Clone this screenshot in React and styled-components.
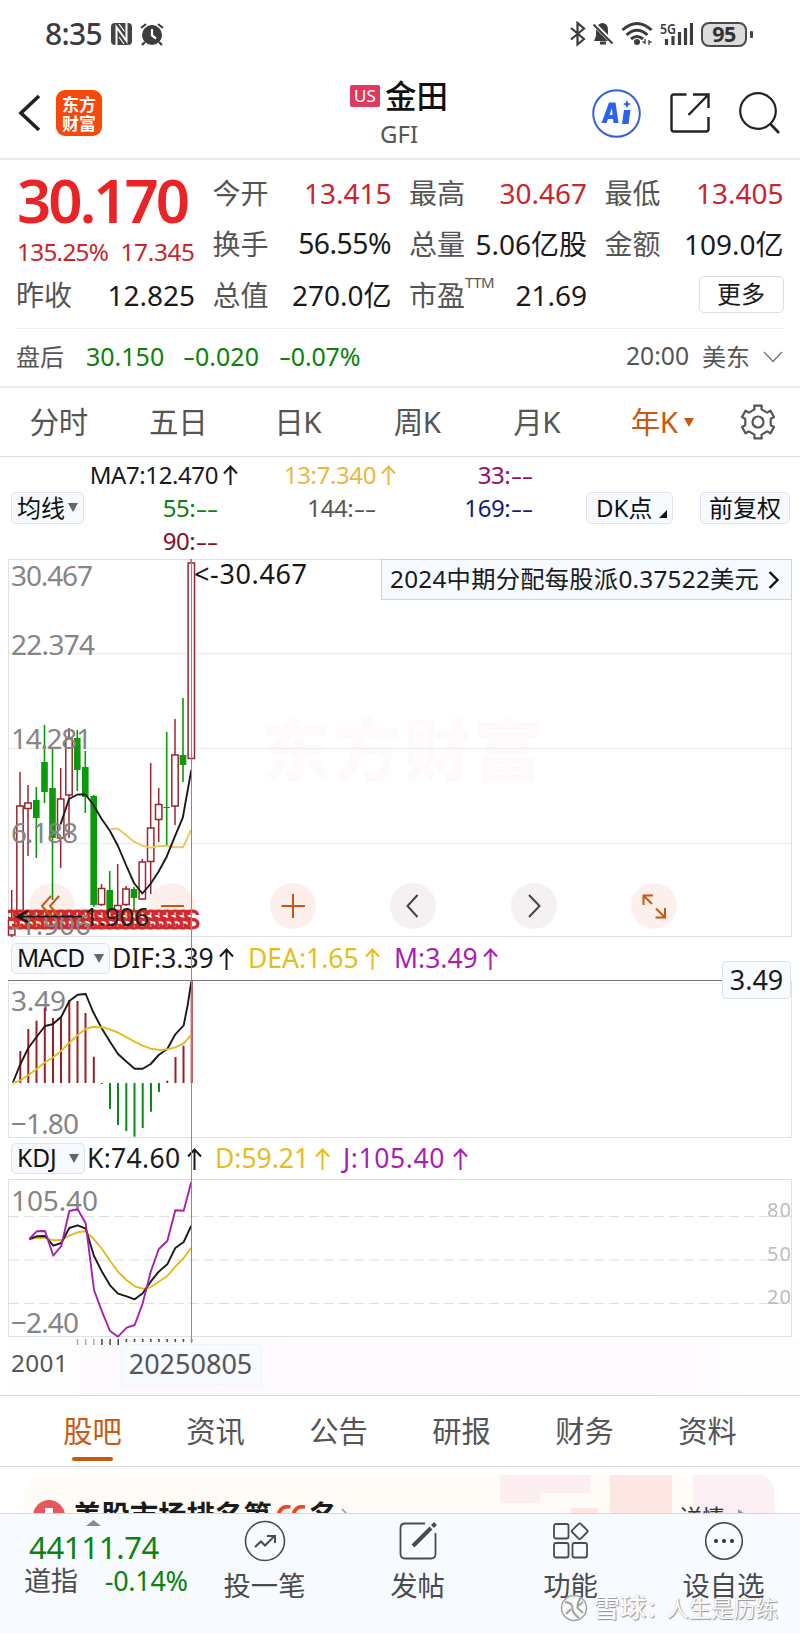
import React from "react";
import styled, { createGlobalStyle } from "styled-components";

const Global = createGlobalStyle`
  *, *::before, *::after { box-sizing: border-box; }
  body { margin: 0; background: #fff; }
  svg { display: block; flex: none; }
`;

const sans = `"Noto Sans", "Noto Sans CJK SC", sans-serif`;
const RED = "#c9252b";
const GREEN = "#0b820b";
const GOLD = "#e3bd1e";
const PURPLE = "#a81fb0";
const ORANGE = "#c8590f";

const Screen = styled.main`
  position: relative;
  width: 800px;
  height: 1633px;
  overflow: hidden;
  display: flex;
  flex-direction: column;
  background: #fff;
  color: #1a1a1a;
  font-family: ${sans};
  white-space: nowrap;
`;

const Num = styled.span`
  font-size: ${(p) => p.$size || 28}px;
  line-height: 1;
  font-weight: ${(p) => p.$weight || 400};
  color: ${(p) => p.$color || "#1a1a1a"};
  letter-spacing: ${(p) => p.$ls || 0}px;
  margin-right: ${(p) => -(p.$ls || 0)}px;
`;
const Dash = styled.span`
  display: inline-block;
  transform: scaleX(1.5);
  transform-origin: 100% 50%;
  margin-left: ${(p) => p.$ml || 3}px;
`;

/* ---------- status bar ---------- */
const StatusBar = styled.header`
  height: 68px;
  flex: none;
  display: flex;
  align-items: center;
  justify-content: space-between;
  padding: 0 47px 0 45px;
`;
const StatusGroup = styled.div`
  display: flex;
  align-items: center;
  gap: ${(p) => p.$gap}px;
`;
const Clock = styled(Num)`
  padding-bottom: 1px;
`;
const Battery = styled.div`
  width: 46px;
  height: 25px;
  border: 2px solid #4a4a4a;
  border-radius: 8px;
  background: #dcdcdc;
  color: #333;
  font-size: 21.5px;
  font-weight: 700;
  line-height: 20px;
  letter-spacing: -0.5px;
  text-align: center;
`;
const Nub = styled.i`
  width: 3px;
  height: 7px;
  border-radius: 1px;
  background: #444;
  margin-left: -5px;
`;

/* ---------- header ---------- */
const Header = styled.nav`
  height: 92px;
  flex: none;
  display: grid;
  grid-template-columns: 300px 1fr 300px;
  align-items: center;
  border-bottom: 2px solid #ebebeb;
`;
const HeadLeft = styled.div`
  display: flex;
  align-items: center;
  gap: 15px;
  padding-left: 17px;
`;
const Logo = styled.div`
  width: 46px;
  height: 46px;
  border-radius: 9px;
  background: #f7480b;
  color: #fff;
  font: 700 17px/19px "Noto Sans CJK SC", sans-serif;
  text-align: center;
  padding-top: 4px;
`;
const HeadTitle = styled.div`
  display: flex;
  flex-direction: column;
  align-items: center;
  gap: 5px;
  padding: 0 2px 0 0;
`;
const TitleRow = styled.div`
  display: flex;
  align-items: center;
  gap: 5px;
  font-size: 31.5px;
  line-height: 36px;
  font-weight: 500;
  color: #111;
`;
const Badge = styled.span`
  width: 30px;
  height: 22px;
  border-radius: 2px;
  background: #e0395f;
  color: #fff;
  font-size: 17px;
  font-weight: 400;
  line-height: 21px;
  text-align: center;
`;
const Ticker = styled.div`
  font-size: 24px;
  line-height: 30px;
  color: #555;
`;
const HeadRight = styled.div`
  display: flex;
  align-items: center;
  justify-content: flex-end;
  gap: 29px;
  padding-right: 20px;
`;

/* ---------- quote ---------- */
const Quote = styled.section`
  height: 169px;
  flex: none;
  margin: 0 16px;
  padding: 7px 0 0 0;
  display: grid;
  grid-template-columns: 179px 179px 178px 179px;
  column-gap: 17.5px;
  border-bottom: 1px solid #f0f0f0;
`;
const QuoteCol = styled.div`
  display: flex;
  flex-direction: column;
`;
const Price = styled.div`
  height: 66px;
  display: flex;
  align-items: center;
  padding-left: 1px;
`;
const Delta = styled.div`
  height: 36px;
  display: flex;
  align-items: center;
  justify-content: space-between;
  padding: 2px 0 0 1px;
`;
const Pair = styled.div`
  height: 51px;
  display: flex;
  align-items: center;
  justify-content: space-between;
`;
const Label = styled.span`
  font-size: 28px;
  line-height: 1;
  color: #555;
  display: flex;
`;
const Sup = styled.sup`
  font-size: 15px;
  line-height: 1;
  margin: -6px 0 0 0;
  letter-spacing: -0.5px;
`;
const More = styled.button`
  width: 85px;
  height: 37px;
  margin-left: auto;
  border: 1.5px solid #dedede;
  border-radius: 5px;
  background: #fff;
  color: #1a1a1a;
  font: 24px/30px ${sans};
  padding: 0 0 2px;
`;
const AfterHours = styled.section`
  height: 59px;
  flex: none;
  display: flex;
  align-items: center;
  padding: 0 17px 2px 16px;
  border-bottom: 2px solid #ebebeb;
  color: #555;
  font-size: 24px;
`;
const Slot = styled.span`
  width: ${(p) => p.$w}px;
  display: flex;
  line-height: 1;
`;
const Fill = styled.span`
  flex: 1;
`;

/* ---------- period tabs ---------- */
const Periods = styled.nav`
  height: 69px;
  flex: none;
  display: flex;
  align-items: center;
  border-bottom: 1px solid #dcdcdc;
`;
const Period = styled.a`
  width: 119.5px;
  padding-right: ${(p) => (p.$on ? 0 : 2)}px;
  text-align: center;
  font-size: 29.5px;
  line-height: 1;
  letter-spacing: -0.3px;
  color: ${(p) => (p.$on ? ORANGE : "#555")};
  display: flex;
  justify-content: center;
  align-items: center;
  gap: 6px;
  padding-left: ${(p) => (p.$on ? 10 : 0)}px;
`;
const Gear = styled.span`
  margin-left: 22px;
`;

/* ---------- chart ---------- */
const Averages = styled.section`
  height: 102px;
  flex: none;
  display: grid;
  grid-template-columns: 80px 127px 158px 157px 1fr;
  grid-template-rows: 35px 32px 33px;
  align-items: center;
  padding: 0 10px 0 11px;
`;
const Avg = styled.span`
  justify-self: end;
  position: relative;
  font-size: 24px;
  line-height: 1;
  letter-spacing: ${(p) => p.$ls ?? -0.4}px;
  color: ${(p) => p.$color};
`;
const ArrowOver = styled.span`
  position: absolute;
  left: calc(100% + 5px);
  top: 2px;
`;
const Chip = styled.button`
  height: ${(p) => p.$h || 32}px;
  width: ${(p) => p.$w}px;
  display: flex;
  align-items: center;
  justify-content: ${(p) => p.$just || "space-between"};
  padding: 0 5px 1px 5px;
  border: 1px solid #dde3ea;
  border-radius: 5px;
  background: #f6faff;
  color: #111;
  font: ${(p) => p.$size || 24}px/1 ${sans};
  letter-spacing: ${(p) => p.$ls || 0}px;
`;
const ChipRow = styled.div`
  display: flex;
  justify-content: flex-end;
  gap: 27px;
`;
const FirstCell = styled.div`
  grid-row: 2;
  grid-column: 1;
`;
const DkLabel = styled.span`
  padding-left: 4px;
`;
const Charts = styled.section`
  position: relative;
  height: 837px;
  flex: none;
  display: flex;
  flex-direction: column;
  border-bottom: 1px solid #d8d8d8;
`;
const Plot = styled.div`
  height: ${(p) => p.$h}px;
  flex: none;
  svg { overflow: visible; }
`;
const IndicatorRow = styled.div`
  height: ${(p) => p.$h}px;
  flex: none;
  display: flex;
  align-items: center;
  padding: 0 0 ${(p) => p.$pb || 0}px 11px;
`;
const Reading = styled.span`
  width: ${(p) => p.$w}px;
  display: flex;
  align-items: center;
  justify-content: space-between;
  margin-left: ${(p) => p.$ml}px;
  font-size: 26.5px;
  line-height: 1;
  color: ${(p) => p.$color};
  letter-spacing: ${(p) => p.$ls || 0}px;
`;
const DateRow = styled.div`
  height: 55px;
  flex: none;
  display: flex;
  align-items: flex-start;
  gap: 54px;
  padding: 5px 0 0 11px;
  background: linear-gradient(90deg, #fff 0, #fdfafd 120px, #fdfcfe 800px);
`;
const StartDate = styled.span`
  width: 56px;
  font-size: 24.3px;
  line-height: 38px;
  color: #555;
  letter-spacing: 0.4px;
`;
const DateTag = styled.span`
  width: 141px;
  height: 42px;
  border: 1px solid #f0f4fa;
  border-radius: 4px;
  background: #f7faff;
  color: #555;
  font-size: 27px;
  line-height: 38px;
  text-align: center;
  padding-right: 2px;
`;
const Banner = styled.div`
  position: absolute;
  right: 8px;
  top: 0;
  width: 411px;
  height: 41px;
  border: 1px solid #ced4d8;
  background: #f6faff;
  display: flex;
  align-items: center;
  justify-content: space-between;
  padding: 0 12px 0 8px;
  font-size: 24.3px;
  line-height: 1;
  letter-spacing: 0.25px;
`;
const Tag = styled.div`
  position: absolute;
  left: 722px;
  top: 402px;
  width: 69px;
  height: 38px;
  border: 1px solid #dde3ea;
  border-radius: 4px;
  background: #f7faff;
  font-size: 27px;
  line-height: 36px;
  text-align: center;
`;
const Crosshair = styled.i`
  position: absolute;
  left: 191px;
  top: 0;
  width: 1px;
  height: 784px;
  background: #8a8a8a;
`;

/* ---------- lower part ---------- */
const Sections = styled.nav`
  height: 71px;
  flex: none;
  display: flex;
  padding: 0 31px;
  border-bottom: 1px solid #d6d8d8;
`;
const SectionTab = styled.a`
  width: 123.2px;
  display: flex;
  flex-direction: column;
  align-items: center;
  font-size: 29.3px;
  line-height: 41px;
  padding-top: 15px;
  color: ${(p) => (p.$on ? ORANGE : "#555")};
  &::after {
    content: "";
    width: 41px;
    height: 4px;
    border-radius: 2px;
    margin-top: 5px;
    background: ${(p) => (p.$on ? ORANGE : "transparent")};
  }
`;
const Feed = styled.section`
  height: 46px;
  flex: none;
  overflow: hidden;
  padding: 8px 25px 0 24px;
`;
const Card = styled.div`
  height: 90px;
  border-radius: 18px;
  overflow: hidden;
  display: flex;
  background:
    linear-gradient(#fdeef1, #fdeef1) 476px 0 / 90px 18px no-repeat,
    linear-gradient(#fdeef1, #fdeef1) 476px 0 / 40px 28px no-repeat,
    linear-gradient(#fde6e4, #fde6e4) 547px 33px / 27px 28px no-repeat,
    linear-gradient(#fde7e2, #fde7e2) 586px 0 / 62px 60px no-repeat,
    linear-gradient(#fdf0f4, #fdf0f4) 669px 0 / 90px 60px no-repeat,
    #fffbf6;
  padding: 25px 28px 0 9px;
  align-items: flex-start;
`;
const Headline = styled.h3`
  margin: -3px 0 0 8px;
  font-size: 28.4px;
  line-height: 36px;
  font-weight: 700;
  color: #1b1b1b;
  display: flex;
`;
const Rank = styled.em`
  color: #e8481c;
  margin: 0 5px 0 3px;
  letter-spacing: -1px;
`;
const Detail = styled.span`
  font-size: 23px;
  line-height: 32px;
  color: #333;
  margin-top: 1px;
`;
const Bottom = styled.footer`
  position: relative;
  height: 121px;
  flex: none;
  display: flex;
  background: #f7fafe;
  border-top: 1px solid #d3d8dc;
`;
const Index = styled.div`
  width: 188px;
  padding-left: 24px;
  display: flex;
  flex-direction: column;
`;
const IndexMark = styled.svg`
  margin: 6px 0 0 62px;
`;
const IndexValue = styled.div`
  height: 31px;
  padding: 3px 0 0 5px;
  margin-top: 3px;
`;
const IndexRow = styled.div`
  height: 40px;
  display: flex;
  justify-content: space-between;
  align-items: center;
  font-size: 27px;
  line-height: 1;
  color: #4c4c4c;
`;
const Action = styled.a`
  width: 153px;
  display: flex;
  flex-direction: column;
  align-items: center;
  font-size: 27.3px;
  line-height: 36px;
  color: #4a4a4a;
  padding-top: 6px;
  gap: 6px;
`;
const Signature = styled.div`
  position: absolute;
  right: 22px;
  bottom: 8px;
  display: flex;
  align-items: center;
  gap: 5px;
  color: #fdfdfd;
  font-size: 22.3px;
  line-height: 34px;
  text-shadow: 1px 1px 1px #929292, 0 0 1px #b2b2b2;
`;
const SignatureName = styled.b`
  font-weight: 500;
  font-size: 26.5px;
`;
const SignatureColon = styled.span`
  margin-right: -2px;
`;

const Up = ({ h = 20 }) => (
  <svg width="15" height={h} viewBox={`0 0 15 ${h}`} fill="none" stroke="currentColor" strokeWidth="2">
    <path d={`M7.5 ${h}V1.500M1 8.500L7.500 1.500L14 8.500`} />
  </svg>
);
const Down = ({ color = "#666" }) => (
  <svg width="10" height="9" viewBox="0 0 10 9"><path d="M0 0H10L5 9Z" fill={color} /></svg>
);

/* x, high, low, body top, body bottom, rising */
const candles = [
  [11.7, 890, 937, 920, 935, 1], [20, 772, 912, 806, 914, 1], [28, 785, 856, 803, 808.5, 1],
  [36.3, 787, 858, 800, 818, 0], [44.5, 725, 803, 762, 792, 0], [52.5, 748, 900, 788, 838, 0],
  [60.7, 768, 868, 799, 838, 1], [69, 728, 838, 739, 795, 1], [77.3, 730, 791, 738, 770, 0],
  [85.3, 751, 813, 767, 797, 0], [93.7, 795, 907, 796, 905, 0], [101.5, 884, 906, 888.5, 904.5, 1],
  [109.7, 871, 912, 890, 912, 0], [117.7, 864, 912, 905.5, 912, 1], [126, 886, 906, 889, 904.5, 1],
  [134, 887, 912, 889, 898, 0], [142.3, 859, 900, 862, 899, 1], [150.7, 763, 894, 828, 861.5, 1],
  [158.7, 788, 842, 804.5, 819.5, 1], [166.7, 732, 845, 807, 808, 0], [175, 719, 825, 755, 806, 1],
  [183, 698, 782, 755, 765, 0], [191.3, 559, 759, 563, 758.5, 1],
];
const bars = [
  [20.3, 1051], [28.3, 1029], [36.5, 1020.7], [44.8, 1007.7], [53, 1018], [61, 1016.7], [69.3, 1000],
  [77.5, 1001], [85.5, 1013], [93.8, 1056.7], [101.8, 1084], [110, 1109], [118, 1125], [126.3, 1131],
  [134.5, 1136.7], [142.7, 1128], [151, 1111.7], [159, 1092], [167.3, 1080.7], [175.5, 1057],
  [183.5, 1045.7], [191.7, 981],
];
const ma7 = "60.5,824.5 69,799 77.5,794.5 85.5,794.5 93.5,805 101.5,818.7 110,831 118,846 126,865 134,883 142.3,893.5 150.5,884 158.5,871.7 166.7,856.7 174.8,836.7 182.8,817.7 191.3,770";
const ma13 = "110.7,828.7 118,828.7 126,835 134,841.7 142.3,845.7 150.5,847.7 158.5,846 166.7,846 174.8,847.3 183,847.3 191,830";
const dif = "12.7,1083 20,1065 28.3,1048 36.7,1036.7 45,1026 52.7,1024.3 61.3,1016.7 69.3,1001 77.7,994.7 85.7,994 93.3,1012.3 101.7,1028.3 110,1041.7 118,1054 126,1061.3 134.7,1068.7 142.7,1068.7 150.7,1064 158.7,1055 167.3,1049 175.3,1034.3 183.7,1025.3 187.7,1005 191.3,981.7";
const dea = "12.7,1083 20,1080.7 28.3,1075 36.7,1069 45,1062.3 53.3,1057.3 61.3,1050.7 69.3,1042.7 77.7,1035 85.7,1029 91.7,1027 103.3,1027.3 110,1029.3 118,1032.7 134.7,1041.7 142.7,1045.7 150.7,1048.7 160,1050 167.3,1049.3 175.3,1047.3 183.7,1043.3 191.3,1035";
const kLine = "29.3,1239 36.7,1236.3 45,1236 53.3,1245.7 61.3,1243 69.3,1228 77.7,1225.3 85.7,1228.7 94,1256 102,1271.7 110,1285.3 118,1293.7 126.7,1296.3 134.7,1299.3 142.7,1293.3 150.7,1281.7 158.7,1271.7 167.3,1264.3 175.3,1248 183.7,1242 191.3,1225.7";
const dLine = "29.3,1239 36.7,1238 45,1237.7 53.3,1240.3 61.3,1240 69.3,1235.7 77.7,1232.3 85,1231.3 94,1239.3 102,1249 110,1260.7 118,1271.7 126.7,1280.3 134.7,1286.3 142.7,1288.7 146.7,1288.7 150.7,1287 158.7,1281.7 167.3,1276 175.3,1266.7 183.7,1258 191.3,1247.7";
const jLine = "29.3,1239 36.7,1231.3 45,1231 53.3,1255.7 61.3,1246 69.3,1211 77.7,1209.3 85.7,1223.3 94,1290 102,1311.7 110,1331 118,1336.7 126.7,1327.7 134.7,1325 142.7,1303.3 150.7,1271.7 158.7,1249.3 167.3,1241 175.3,1210.3 183.7,1210.7 191.3,1181.7";

const Line = ({ points, color, w = 1.9 }) => (
  <polyline points={points} fill="none" stroke={color} strokeWidth={w} strokeLinejoin="round" />
);
const Scale = ({ x = 11, y, len, children, size = 28, fill = "#858585" }) => (
  <text x={x} y={y} fontSize={size} fill={fill} fontFamily={sans} textLength={len}>{children}</text>
);

const PricePlot = () => (
  <Plot $h={378}>
    <svg width="800" height="378" viewBox="0 559 800 378">
      <clipPath id="plotLeft"><rect x="8" y="900" width="192" height="40" /></clipPath>
      <text x="262" y="776" fontSize="68" fontWeight="900" fill="#fefafa" fontFamily={sans} textLength="280">东方财富</text>
      <rect x="8.5" y="559.5" width="783" height="377" fill="none" stroke="#dfe1e1" />
      {[653.5, 748.5, 843.5].map((y) => <path key={y} d={`M9 ${y}H791`} stroke="#efefef" strokeWidth="1.3" />)}
      {[[52, 1], [172, 1], [293, 1], [413, 0], [534, 0], [654, 1]].map(([x, warm]) => (
        <circle key={x} cx={x} cy="906" r="23" fill={warm ? "#fdf0ec" : "#f5f1f3"} />
      ))}
      {candles.map(([x, hi, lo, top, bot, rise]) => rise ? (
        <g key={x} stroke="#9d2530" strokeWidth="1.5" fill="#fff">
          <path d={`M${x} ${hi}V${lo}`} />
          <rect x={x - 3.2} y={top} width="6.4" height={bot - top} />
        </g>
      ) : (
        <g key={x} fill="#0a9a0a">
          <rect x={x - 0.8} y={hi} width="1.6" height={lo - hi} />
          <rect x={x - 3.3} y={top} width="6.6" height={bot - top} />
        </g>
      ))}
      <Line points={ma13} color="#edc660" />
      <Line points={ma7} color="#1a1a1a" />
      <Scale y={586} len={82}>30.467</Scale>
      <Scale y={655} len={84}>22.374</Scale>
      <Scale y={749} len={81}>14.281</Scale>
      <Scale y={843} len={67}>6.188</Scale>
      <g clipPath="url(#plotLeft)">
        {candles.map(([x]) => (
          <text key={x} x={x} y="929" textAnchor="middle" fontSize="27" fill="#d02a2a" stroke="#d02a2a" strokeWidth="1" fontFamily='"Liberation Sans", sans-serif'>S</text>
        ))}
      </g>
      <Scale y={935} len={80}>-1.906</Scale>
      <g fill="none" stroke="#161616" strokeWidth="2">
        <path d="M28 911L17 916.500L28 922M17 916.500H82" />
      </g>
      <Scale x={84} y={926} len={65} size={26} fill="#202020">1.906</Scale>
      <text x="194" y="584" fontSize="27" fill="#161616" fontFamily={sans} textLength="113">&lt;-30.467</text>
      <g fill="none" strokeWidth="2" stroke="#c8590f">
        <path d="M51 896L42 906L51 916M59 896L50 906L59 916M161 906H184M281.500 906H305M293 894V918" />
        <path d="M643.500 905V895.500H653M644 896L652 904M665 908V917.500H655.500M664.500 917L656 908.500" />
      </g>
      <path d="M417.500 895L407.500 906L417.500 917M529 895L539.500 906L529 917" fill="none" stroke="#444" strokeWidth="2" />
    </svg>
  </Plot>
);

const MacdPlot = () => (
  <Plot $h={158}>
    <svg width="800" height="158" viewBox="0 980 800 158">
      <path d="M8.500 981V1137.500H791.500V981" fill="none" stroke="#e0e2e2" />
      <path d="M9 983.500H722" stroke="#f4f4f4" />
      <path d="M8 980.500H722" stroke="#777" />
      <Scale y={1011} len={55}>3.49</Scale>
      <Scale y={1134} len={68}>−1.80</Scale>
      {bars.map(([x, y]) => (
        <path key={x} d={`M${x} 1083V${y}`} stroke={y > 1083 ? "#0b8a1b" : "#9d1f26"} strokeWidth="2" />
      ))}
      <Line points={dif} color="#1a1a1a" />
      <Line points={dea} color="#e3bd1e" />
    </svg>
  </Plot>
);

const KdjPlot = () => (
  <Plot $h={159}>
    <svg width="800" height="159" viewBox="0 1180 800 159">
      <rect x="8.500" y="1179.500" width="783" height="157" fill="none" stroke="#dfe1e1" />
      {[1216.500, 1260, 1303.500].map((y) => (
        <path key={y} d={`M9 ${y}H791`} stroke="#dedede" strokeWidth="1.200" strokeDasharray="10 5" />
      ))}
      <Scale y={1211} len={87}>105.40</Scale>
      <Scale y={1333} len={68}>−2.40</Scale>
      <Scale x={767} y={1217} len={24} size={20} fill="#bdbdbd">80</Scale>
      <Scale x={767} y={1261} len={24} size={20} fill="#bdbdbd">50</Scale>
      <Scale x={767} y={1304} len={24} size={20} fill="#bdbdbd">20</Scale>
      <Line points={dLine} color="#e3b91e" />
      <Line points={kLine} color="#1a1a1a" />
      <Line points={jLine} color="#a81fb0" />
    </svg>
  </Plot>
);

const TickMarks = styled.svg`
  position: absolute;
  left: 76px;
  top: 780px;
`;
const Ticks = () => (
  <TickMarks width="120" height="7" viewBox="0 0 120 7">
    {Array.from({ length: 15 }, (_, i) => (
      <path key={i} d={`M${1.500 + i * 8.150} 0V${i < 6 ? 6 : 3}`} stroke={i < 3 ? "#aaa" : "#444"} strokeWidth="1.500" />
    ))}
  </TickMarks>
);

const gearPath = (() => {
  const pts = [];
  for (let i = 0; i < 6; i++) {
    const a = ((i * 60 - 90) * Math.PI) / 180;
    [[-0.43, 12.8], [-0.27, 13.2], [-0.22, 16.8], [0.22, 16.8], [0.27, 13.2], [0.43, 12.8]].forEach(([d, r]) =>
      pts.push(`${(18 + r * Math.cos(a + d)).toFixed(1)},${(18 + r * Math.sin(a + d)).toFixed(1)}`));
  }
  return pts.join(" ");
})();

const StatusIcons = () => (
  <svg width="123" height="26" viewBox="570 21 123 26" fill="none" stroke="#3c3c3c">
    <path d="M571 28L584 39L577.500 44.500V23L584 28.500L571 39.500" strokeWidth="2.200" />
    <path d="M594 41H612L608 35V30Q608 23 602 23Q596 24 596 32V36Z" fill="#3c3c3c" stroke="none" />
    <path d="M600 43H606" strokeWidth="3" />
    <path d="M593 23L614 44" stroke="#fff" strokeWidth="4.500" /><path d="M593.500 24.500L612.500 43.500" strokeWidth="2" />
    <path d="M622.500 30Q637 17 651.500 30M626.500 35Q637 25.500 647.500 35M631 39Q637 34 643 39" strokeWidth="3" />
    <circle cx="637" cy="42" r="3" fill="#3c3c3c" stroke="none" />
    <path d="M645 39V44M642.500 42H645M649 40V45M649 42H651.500" strokeWidth="1.300" />
    <path d="M666.500 39V45M673 36V45M679.500 32V45M685.500 28V45M691.500 23V45" strokeWidth="3.200" />
    <text x="660" y="33.500" fontSize="14.500" fontWeight="600" fill="#3c3c3c" stroke="none" fontFamily={sans} textLength="16" lengthAdjust="spacingAndGlyphs">5G</text>
  </svg>
);

const Blank = ({ n, color }) => <Avg $color={color}>{n}:<Dash $ml={8}>--</Dash></Avg>;

export default function App() {
  return (
    <Screen>
      <Global />
      <StatusBar>
        <StatusGroup $gap={8}>
          <Clock $size={30} $weight={500} $color="#3c3c3c" $ls={-0.7}>8:35</Clock>
          <svg width="21" height="22" viewBox="0 0 21 22" fill="none">
            <rect width="21" height="22" rx="4" fill="#444" />
            <path d="M5.500 22V4L15.500 18V0" stroke="#fff" strokeWidth="2" /><path d="M8 1L13.500 8.500M8 14L13 21" stroke="#fff" strokeWidth="1.200" />
          </svg>
          <svg width="24" height="23" viewBox="0 0 24 23" fill="none" stroke="#3c3c3c">
            <circle cx="12" cy="12" r="10" fill="#3c3c3c" stroke="none" />
            <path d="M1 5L6 1M23 5L18 1M5 19L2 22M19 19L22 22" strokeWidth="2.200" />
            <path d="M12 6V12.500L16 15.500" stroke="#fff" strokeWidth="2.200" />
          </svg>
        </StatusGroup>
        <StatusGroup $gap={8}>
          <StatusIcons />
          <Battery>95</Battery>
          <Nub />
        </StatusGroup>
      </StatusBar>

      <Header>
        <HeadLeft>
          <svg width="24" height="38" viewBox="0 0 24 38" fill="none" stroke="#222" strokeWidth="3.600"><path d="M22 2L4 19L22 36" /></svg>
          <Logo>东方<br />财富</Logo>
        </HeadLeft>
        <HeadTitle>
          <TitleRow><Badge>US</Badge>金田</TitleRow>
          <Ticker>GFI</Ticker>
        </HeadTitle>
        <HeadRight>
          <svg width="49" height="49" viewBox="0 0 49 49">
            <circle cx="24.500" cy="24.500" r="23.300" fill="#fff" stroke="#3560d8" strokeWidth="2" />
            <path d="M9.500 34L17 13.500H23.500L26.500 34H21.500L21 30H16L14.500 34ZM17.500 26H20.500L20 19Z" fill="#2b62ee" fillRule="evenodd" />
            <path d="M32 21H38.500L36.500 35H30ZM35 11L36.300 14L39 15L36.300 16.300L35 19L33.500 16.300L31 15L33.500 14Z" fill="#2b62ee" />
          </svg>
          <svg width="40" height="40" viewBox="0 0 40 40" fill="none" stroke="#222" strokeWidth="2.400">
            <path d="M16.500 1.500H4Q1.500 1.500 1.500 4V36Q1.500 38.500 4 38.500H36Q38.500 38.500 38.500 36V24M23 1.500H38.500V15M38 2L18.500 22" />
          </svg>
          <svg width="41" height="42" viewBox="0 0 41 42" fill="none" stroke="#222" strokeWidth="2.200">
            <circle cx="19" cy="19" r="17.800" /><path d="M31 31.500L40 41" strokeWidth="2.600" />
          </svg>
        </HeadRight>
      </Header>

      <Quote>
        <QuoteCol>
          <Price><Num $size={60} $weight={600} $color="#e92326" $ls={-3}>30.170</Num></Price>
          <Delta><Num $size={24.300} $color={RED} $ls={-0.700}>135.25%</Num><Num $size={24.300} $color={RED} $ls={-0.300}>17.345</Num></Delta>
          <Pair><Label>昨收</Label><Num>12.825</Num></Pair>
        </QuoteCol>
        <QuoteCol>
          <Pair><Label>今开</Label><Num $color={RED}>13.415</Num></Pair>
          <Pair><Label>换手</Label><Num $size={28.300} $ls={-0.500}>56.55%</Num></Pair>
          <Pair><Label>总值</Label><Num>270.0亿</Num></Pair>
        </QuoteCol>
        <QuoteCol>
          <Pair><Label>最高</Label><Num $color={RED}>30.467</Num></Pair>
          <Pair><Label>总量</Label><Num>5.06亿股</Num></Pair>
          <Pair><Label>市盈<Sup>TTM</Sup></Label><Num>21.69</Num></Pair>
        </QuoteCol>
        <QuoteCol>
          <Pair><Label>最低</Label><Num $color={RED}>13.405</Num></Pair>
          <Pair><Label>金额</Label><Num>109.0亿</Num></Pair>
          <Pair><More>更多</More></Pair>
        </QuoteCol>
      </Quote>

      <AfterHours>
        <Slot $w={70}>盘后</Slot>
        <Slot $w={97}><Num $size={25} $color={GREEN}>30.150</Num></Slot>
        <Slot $w={96}><Num $size={25} $color={GREEN}><Dash $ml={4}>-</Dash>0.020</Num></Slot>
        <Num $size={25} $color={GREEN} $ls={-0.200}><Dash $ml={4}>-</Dash>0.07%</Num>
        <Fill />
        <Slot $w={76}><Num $size={24.700} $color="#555">20:00</Num></Slot>
        <Slot $w={61}>美东</Slot>
        <svg width="20" height="12" viewBox="0 0 20 12" fill="none" stroke="#777" strokeWidth="1.400"><path d="M1 1L10 10.500L19 1" /></svg>
      </AfterHours>

      <Periods>
        {["分时", "五日", "日K", "周K", "月K"].map((t) => <Period key={t}>{t}</Period>)}
        <Period $on>年K<Down color={ORANGE} /></Period>
        <Gear><svg width="38" height="36" viewBox="-1 0 38 36" fill="none" stroke="#555" strokeWidth="2.200" strokeLinejoin="round"><polygon points={gearPath} /><circle cx="18" cy="18" r="5.500" /></svg></Gear>
      </Periods>

      <Averages>
        <span />
        <Avg $color="#1a1a1a">MA7:12.470<ArrowOver><Up /></ArrowOver></Avg>
        <Avg $color="#e8b840">13:7.340<ArrowOver><Up /></ArrowOver></Avg>
        <Blank n="33" color="#980c68" />
        <span />
        <FirstCell><Chip $w={73}>均线<Down /></Chip></FirstCell>
        <Blank n="55" color={GREEN} />
        <Blank n="144" color="#555" />
        <Blank n="169" color="#101d80" />
        <ChipRow>
          <Chip $w={87}><DkLabel>DK点</DkLabel><svg width="8" height="22" viewBox="0 0 8 22"><path d="M8 13V21H0Z" fill="#111" /></svg></Chip>
          <Chip $w={90} $just="center">前复权</Chip>
        </ChipRow>
        <span />
        <Blank n="90" color="#8a0f1c" />
      </Averages>

      <Charts>
        <PricePlot />
        <IndicatorRow $h={43}>
          <Chip $w={99} $h={31} $size={24.500} $ls={-0.900}>MACD<Down /></Chip>
          <Reading $ml={2} $w={122} $color="#1a1a1a"><span>DIF:3.39</span><Up h={22} /></Reading>
          <Reading $ml={14} $w={132} $color={GOLD}><span>DEA:1.65</span><Up h={22} /></Reading>
          <Reading $ml={14} $w={104} $color={PURPLE}><span>M:3.49</span><Up h={22} /></Reading>
        </IndicatorRow>
        <MacdPlot />
        <IndicatorRow $h={42} $pb={1}>
          <Chip $w={74} $h={31} $size={24.500}>KDJ<Down /></Chip>
          <Reading $ml={2} $w={115} $color="#1a1a1a" $ls={0.300}><span>K:74.60</span><Up h={22} /></Reading>
          <Reading $ml={13} $w={115} $color={GOLD}><span>D:59.21</span><Up h={22} /></Reading>
          <Reading $ml={13} $w={125} $color={PURPLE} $ls={0.600}><span>J:105.40</span><Up h={22} /></Reading>
        </IndicatorRow>
        <KdjPlot />
        <DateRow><StartDate>2001</StartDate><DateTag>20250805</DateTag></DateRow>
        <Ticks />
        <Crosshair />
        <Banner>
          2024中期分配每股派0.37522美元
          <svg width="11" height="18" viewBox="0 0 11 18" fill="none" stroke="#111" strokeWidth="2.400"><path d="M1.500 1L9.500 9L1.500 17" /></svg>
        </Banner>
        <Tag>3.49</Tag>
      </Charts>

      <Sections>
        {["股吧", "资讯", "公告", "研报", "财务", "资料"].map((t, i) => <SectionTab key={t} $on={i === 0}>{t}</SectionTab>)}
      </Sections>

      <Feed>
        <Card>
          <svg width="32" height="32" viewBox="0 0 32 32"><circle cx="16" cy="16" r="16" fill="#e4575a" /><path d="M12 8H20V16H12Z" fill="#fff" /></svg>
          <Headline>美股市场排名第<Rank>66</Rank>名</Headline>
          <svg width="14" height="30" viewBox="0 0 14 30" fill="none" stroke="#999" strokeWidth="1.600"><path d="M5 9L12 16L5 23" /></svg>
          <Fill />
          <Detail>详情</Detail>
          <svg width="22" height="30" viewBox="0 0 22 30"><path d="M13 9L20 14L13 19Z" fill="#999" /></svg>
        </Card>
      </Feed>

      <Bottom>
        <Index>
          <IndexMark width="15" height="6" viewBox="0 0 15 6"><path d="M0 6L7.500 0L15 6Z" fill="#858b91" /></IndexMark>
          <IndexValue><Num $size={31} $color={GREEN} $ls={-0.300}>44111.74</Num></IndexValue>
          <IndexRow>道指<Num $size={27} $color={GREEN} $ls={-0.300}>-0.14%</Num></IndexRow>
        </Index>
        <Action>
          <svg width="42" height="42" viewBox="0 0 42 42" fill="none" stroke="#4a4a4a" strokeWidth="1.600">
            <circle cx="21" cy="21" r="19.500" /><path d="M11 27L17 21.500L21 25.500L30 16.500M23 16H31V23" strokeWidth="2" />
          </svg>投一笔
        </Action>
        <Action>
          <svg width="42" height="42" viewBox="0 0 42 42" fill="none" stroke="#4a4a4a" strokeWidth="1.800">
            <path d="M28 3.500H8Q3.500 3.500 3.500 8V34Q3.500 38.500 8 38.500H34Q38.500 38.500 38.500 34V13" />
            <path d="M16 26L34 8" strokeWidth="4" /><path d="M35.500 6.500L38.500 3.500" strokeWidth="4" />
          </svg>发帖
        </Action>
        <Action>
          <svg width="42" height="42" viewBox="0 0 42 42" fill="none" stroke="#4a4a4a" strokeWidth="1.800">
            <rect x="4" y="4" width="14.500" height="14.500" rx="2" /><rect x="4" y="23" width="14.500" height="14.500" rx="2" />
            <rect x="22.500" y="23" width="14.500" height="14.500" rx="2" /><rect x="23.700" y="5.200" width="12" height="12" rx="1.500" transform="rotate(45 29.700 11.200)" />
          </svg>功能
        </Action>
        <Action>
          <svg width="42" height="42" viewBox="0 0 42 42" fill="none" stroke="#4a4a4a" strokeWidth="1.600">
            <circle cx="21" cy="21" r="18.300" /><g fill="#333" stroke="none"><circle cx="13" cy="21" r="2" /><circle cx="21" cy="21" r="2" /><circle cx="29" cy="21" r="2" /></g>
          </svg>设自选
        </Action>
        <Signature>
          <svg width="28" height="28" viewBox="0 0 28 28" fill="none" stroke="#a2a2a2" strokeWidth="1.500">
            <circle cx="14" cy="14" r="12.500" fill="#fafafa" fillOpacity="0.850" /><path d="M5 8Q13 9 12.500 14T19 24M21 3Q17 9 17.500 14L23 19M6 20L11 15M18 12L23 8" strokeWidth="2" />
          </svg>
          <span><SignatureName>雪球</SignatureName><SignatureColon>：</SignatureColon>人生是历练</span>
        </Signature>
      </Bottom>
    </Screen>
  );
}
